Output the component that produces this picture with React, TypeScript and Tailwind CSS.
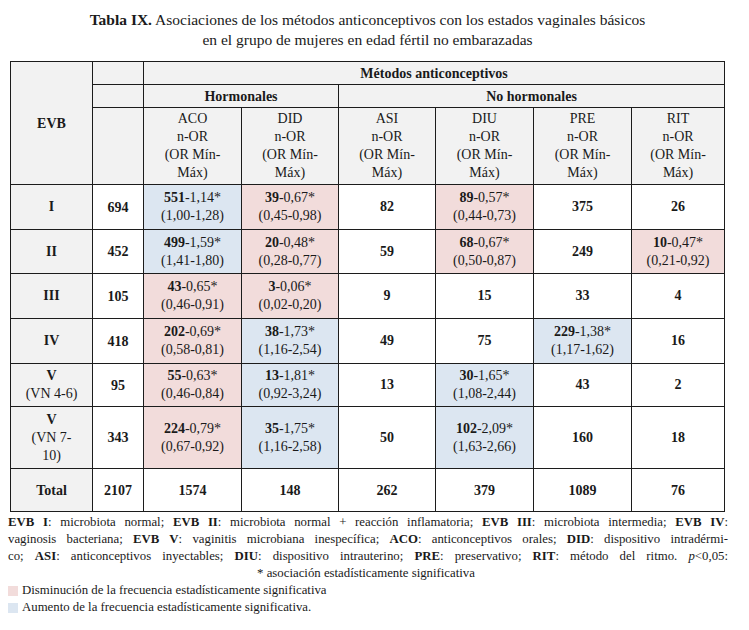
const cols = ["ACO", "DID", "ASI", "DIU", "PRE", "RIT"];

type Cell = { n: string; or?: string; ci?: string; tone?: "red" | "blue" };

const rows: { evb: React.ReactNode; total: string; cells: Cell[]; h: string }[] = [
  {
    evb: "I",
    total: "694",
    h: "h-[45px]",
    cells: [
      { n: "551", or: "-1,14*", ci: "(1,00-1,28)", tone: "blue" },
      { n: "39", or: "-0,67*", ci: "(0,45-0,98)", tone: "red" },
      { n: "82" },
      { n: "89", or: "-0,57*", ci: "(0,44-0,73)", tone: "red" },
      { n: "375" },
      { n: "26" },
    ],
  },
  {
    evb: "II",
    total: "452",
    h: "h-[44px]",
    cells: [
      { n: "499", or: "-1,59*", ci: "(1,41-1,80)", tone: "blue" },
      { n: "20", or: "-0,48*", ci: "(0,28-0,77)", tone: "red" },
      { n: "59" },
      { n: "68", or: "-0,67*", ci: "(0,50-0,87)", tone: "red" },
      { n: "249" },
      { n: "10", or: "-0,47*", ci: "(0,21-0,92)", tone: "red" },
    ],
  },
  {
    evb: "III",
    total: "105",
    h: "h-[45px]",
    cells: [
      { n: "43", or: "-0,65*", ci: "(0,46-0,91)", tone: "red" },
      { n: "3", or: "-0,06*", ci: "(0,02-0,20)", tone: "red" },
      { n: "9" },
      { n: "15" },
      { n: "33" },
      { n: "4" },
    ],
  },
  {
    evb: "IV",
    total: "418",
    h: "h-[45px]",
    cells: [
      { n: "202", or: "-0,69*", ci: "(0,58-0,81)", tone: "red" },
      { n: "38", or: "-1,73*", ci: "(1,16-2,54)", tone: "blue" },
      { n: "49" },
      { n: "75" },
      { n: "229", or: "-1,38*", ci: "(1,17-1,62)", tone: "blue" },
      { n: "16" },
    ],
  },
  {
    evb: (
      <>
        V<br />
        <span className="font-normal">(VN 4-6)</span>
      </>
    ),
    total: "95",
    h: "h-[43px]",
    cells: [
      { n: "55", or: "-0,63*", ci: "(0,46-0,84)", tone: "red" },
      { n: "13", or: "-1,81*", ci: "(0,92-3,24)", tone: "blue" },
      { n: "13" },
      { n: "30", or: "-1,65*", ci: "(1,08-2,44)", tone: "blue" },
      { n: "43" },
      { n: "2" },
    ],
  },
  {
    evb: (
      <>
        V<br />
        <span className="font-normal">
          (VN 7-
          <br />
          10)
        </span>
      </>
    ),
    total: "343",
    h: "h-[62px]",
    cells: [
      { n: "224", or: "-0,79*", ci: "(0,67-0,92)", tone: "red" },
      { n: "35", or: "-1,75*", ci: "(1,16-2,58)", tone: "blue" },
      { n: "50" },
      { n: "102", or: "-2,09*", ci: "(1,63-2,66)", tone: "blue" },
      { n: "160" },
      { n: "18" },
    ],
  },
];

const td = "border border-[#1c1c1c] text-center align-middle p-0";
const line = "whitespace-nowrap text-justify [text-align-last:justify]";

function DataCell({ c }: { c: Cell }) {
  const bg = c.tone === "red" ? "bg-[#f2dcdb]" : c.tone === "blue" ? "bg-[#dce6f1]" : "bg-white";
  return (
    <td className={`${td} ${bg} leading-[18px]`}>
      {c.or ? (
        <>
          <span className="font-bold">{c.n}</span>
          {c.or}
          <br />
          {c.ci}
        </>
      ) : (
        <span className="font-bold">{c.n}</span>
      )}
    </td>
  );
}

export default function App() {
  return (
    <div className="w-[749px] h-[630px] bg-white text-[#1a1a1a] font-['Liberation_Serif',serif] overflow-hidden">
      <div className="pt-[10px] pr-[14px] text-center text-[15.5px] leading-[20px]">
        <div>
          <span className="font-bold">Tabla IX.</span> Asociaciones de los métodos anticonceptivos con los estados vaginales básicos
        </div>
        <div>en el grupo de mujeres en edad fértil no embarazadas</div>
      </div>

      <table className="mt-[11px] ml-[10px] w-[714px] border-collapse table-fixed text-[14px]">
        <colgroup>
          <col className="w-[82px]" />
          <col className="w-[51px]" />
          <col className="w-[98px]" />
          <col className="w-[97px]" />
          <col className="w-[97px]" />
          <col className="w-[98px]" />
          <col className="w-[98px]" />
          <col className="w-[93px]" />
        </colgroup>
        <tbody>
          <tr className="h-[23px] bg-[#f2f2f2]">
            <td rowSpan={3} className={`${td} font-bold`}>
              EVB
            </td>
            <td className={td}></td>
            <td colSpan={6} className={`${td} font-bold`}>
              Métodos anticonceptivos
            </td>
          </tr>
          <tr className="h-[23px] bg-[#f2f2f2]">
            <td className={td}></td>
            <td colSpan={2} className={`${td} font-bold`}>
              Hormonales
            </td>
            <td colSpan={4} className={`${td} font-bold`}>
              No hormonales
            </td>
          </tr>
          <tr className="h-[77px] bg-[#f2f2f2]">
            <td className={td}></td>
            {cols.map((c) => (
              <td key={c} className={`${td} leading-[18px]`}>
                {c}
                <br />
                n-OR
                <br />
                (OR Mín-
                <br />
                Máx)
              </td>
            ))}
          </tr>
          {rows.map((r, i) => (
            <tr key={i} className={r.h}>
              <td className={`${td} bg-[#f2f2f2] font-bold leading-[18px]`}>{r.evb}</td>
              <td className={`${td} bg-white font-bold`}>{r.total}</td>
              {r.cells.map((c, j) => (
                <DataCell key={j} c={c} />
              ))}
            </tr>
          ))}
          <tr className="h-[43px]">
            <td className={`${td} bg-[#f2f2f2] font-bold`}>Total</td>
            {["2107", "1574", "148", "262", "379", "1089", "76"].map((v) => (
              <td key={v} className={`${td} bg-white font-bold`}>
                {v}
              </td>
            ))}
          </tr>
        </tbody>
      </table>

      <div className="mt-[2px] ml-[8px] w-[720px] text-[12.8px] leading-[17px]">
        <div className={line}>
          <b>EVB I</b>: microbiota normal; <b>EVB II</b>: microbiota normal + reacción inflamatoria; <b>EVB III</b>: microbiota intermedia; <b>EVB IV</b>:
        </div>
        <div className={line}>
          vaginosis bacteriana; <b>EVB V</b>: vaginitis microbiana inespecífica; <b>ACO</b>: anticonceptivos orales; <b>DID</b>: dispositivo intradérmi-
        </div>
        <div className={line}>
          co; <b>ASI</b>: anticonceptivos inyectables; <b>DIU</b>: dispositivo intrauterino; <b>PRE</b>: preservativo; <b>RIT</b>: método del ritmo. <i>p</i>&lt;0,05:
        </div>
        <div className="text-center pr-[4px]">* asociación estadísticamente significativa</div>
        <div className="flex items-center gap-[4px]">
          <span className="inline-block w-[10px] h-[10px] bg-[#f2dcdb]" />
          <span>Disminución de la frecuencia estadísticamente significativa</span>
        </div>
        <div className="flex items-center gap-[4px]">
          <span className="inline-block w-[10px] h-[10px] bg-[#dce6f1]" />
          <span>Aumento de la frecuencia estadísticamente significativa.</span>
        </div>
      </div>
    </div>
  );
}
